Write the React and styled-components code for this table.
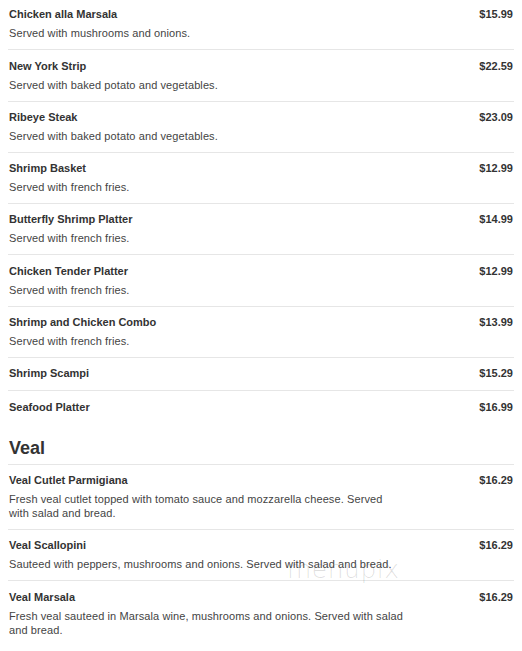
import React from 'react'
import styled, { createGlobalStyle } from 'styled-components'

const GlobalStyle = createGlobalStyle`
  html, body {
    margin: 0;
    padding: 0;
    background: #ffffff;
  }
  body {
    font-family: 'Liberation Sans', Arial, sans-serif;
    color: #333333;
  }
`

const Page = styled.div`
  position: relative;
  margin: 0 8px;
  padding-top: 7.3px;
`

const Section = styled.section`
  display: flex;
  flex-direction: column;
`

const SectionTitle = styled.h2`
  margin: 13px 0 0;
  padding: 0 1px 5px;
  font-size: 18px;
  line-height: 22px;
  font-weight: bold;
  color: #333333;
  border-bottom: 1px solid #e6e6e6;
`

const Item = styled.div`
  display: flex;
  justify-content: space-between;
  align-items: flex-start;
  padding: ${(p) => (p.$first ? '0' : '8.3px')} 1px 9px;
  border-bottom: 1px solid #e6e6e6;

  &:last-child {
    border-bottom: none;
  }
`

const ItemBody = styled.div`
  display: flex;
  flex-direction: column;
  gap: 4px;
  width: 395px;
`

const ItemName = styled.div`
  font-size: 11px;
  line-height: 15px;
  font-weight: bold;
  color: #333333;
`

const ItemDesc = styled.div`
  font-size: 11px;
  line-height: 14px;
  letter-spacing: 0.1px;
  color: #444444;
`

const Price = styled.div`
  font-size: 11px;
  line-height: 15px;
  font-weight: bold;
  color: #333333;
  text-align: right;
`

const Watermark = styled.div`
  position: absolute;
  left: 279px;
  top: 555px;
  font-family: 'DejaVu Sans', sans-serif;
  font-size: 25px;
  font-weight: 200;
  letter-spacing: 0.5px;
  color: rgba(0, 0, 0, 0.13);
  pointer-events: none;
`

const mains = [
  { name: 'Chicken alla Marsala', desc: 'Served with mushrooms and onions.', price: '$15.99' },
  { name: 'New York Strip', desc: 'Served with baked potato and vegetables.', price: '$22.59' },
  { name: 'Ribeye Steak', desc: 'Served with baked potato and vegetables.', price: '$23.09' },
  { name: 'Shrimp Basket', desc: 'Served with french fries.', price: '$12.99' },
  { name: 'Butterfly Shrimp Platter', desc: 'Served with french fries.', price: '$14.99' },
  { name: 'Chicken Tender Platter', desc: 'Served with french fries.', price: '$12.99' },
  { name: 'Shrimp and Chicken Combo', desc: 'Served with french fries.', price: '$13.99' },
  { name: 'Shrimp Scampi', price: '$15.29' },
  { name: 'Seafood Platter', price: '$16.99' },
]

const veal = [
  {
    name: 'Veal Cutlet Parmigiana',
    desc: 'Fresh veal cutlet topped with tomato sauce and mozzarella cheese. Served with salad and bread.',
    price: '$16.29',
  },
  {
    name: 'Veal Scallopini',
    desc: 'Sauteed with peppers, mushrooms and onions. Served with salad and bread.',
    price: '$16.29',
  },
  {
    name: 'Veal Marsala',
    desc: 'Fresh veal sauteed in Marsala wine, mushrooms and onions. Served with salad and bread.',
    price: '$16.29',
  },
]

function MenuItem({ item, first }) {
  return (
    <Item $first={first}>
      <ItemBody>
        <ItemName>{item.name}</ItemName>
        {item.desc && <ItemDesc>{item.desc}</ItemDesc>}
      </ItemBody>
      <Price>{item.price}</Price>
    </Item>
  )
}

export default function App() {
  return (
    <>
      <GlobalStyle />
      <Page>
        <Section>
          {mains.map((item, i) => (
            <MenuItem key={item.name} item={item} first={i === 0} />
          ))}
        </Section>
        <Section>
          <SectionTitle>Veal</SectionTitle>
          {veal.map((item) => (
            <MenuItem key={item.name} item={item} />
          ))}
        </Section>
        <Watermark>menupix</Watermark>
      </Page>
    </>
  )
}
